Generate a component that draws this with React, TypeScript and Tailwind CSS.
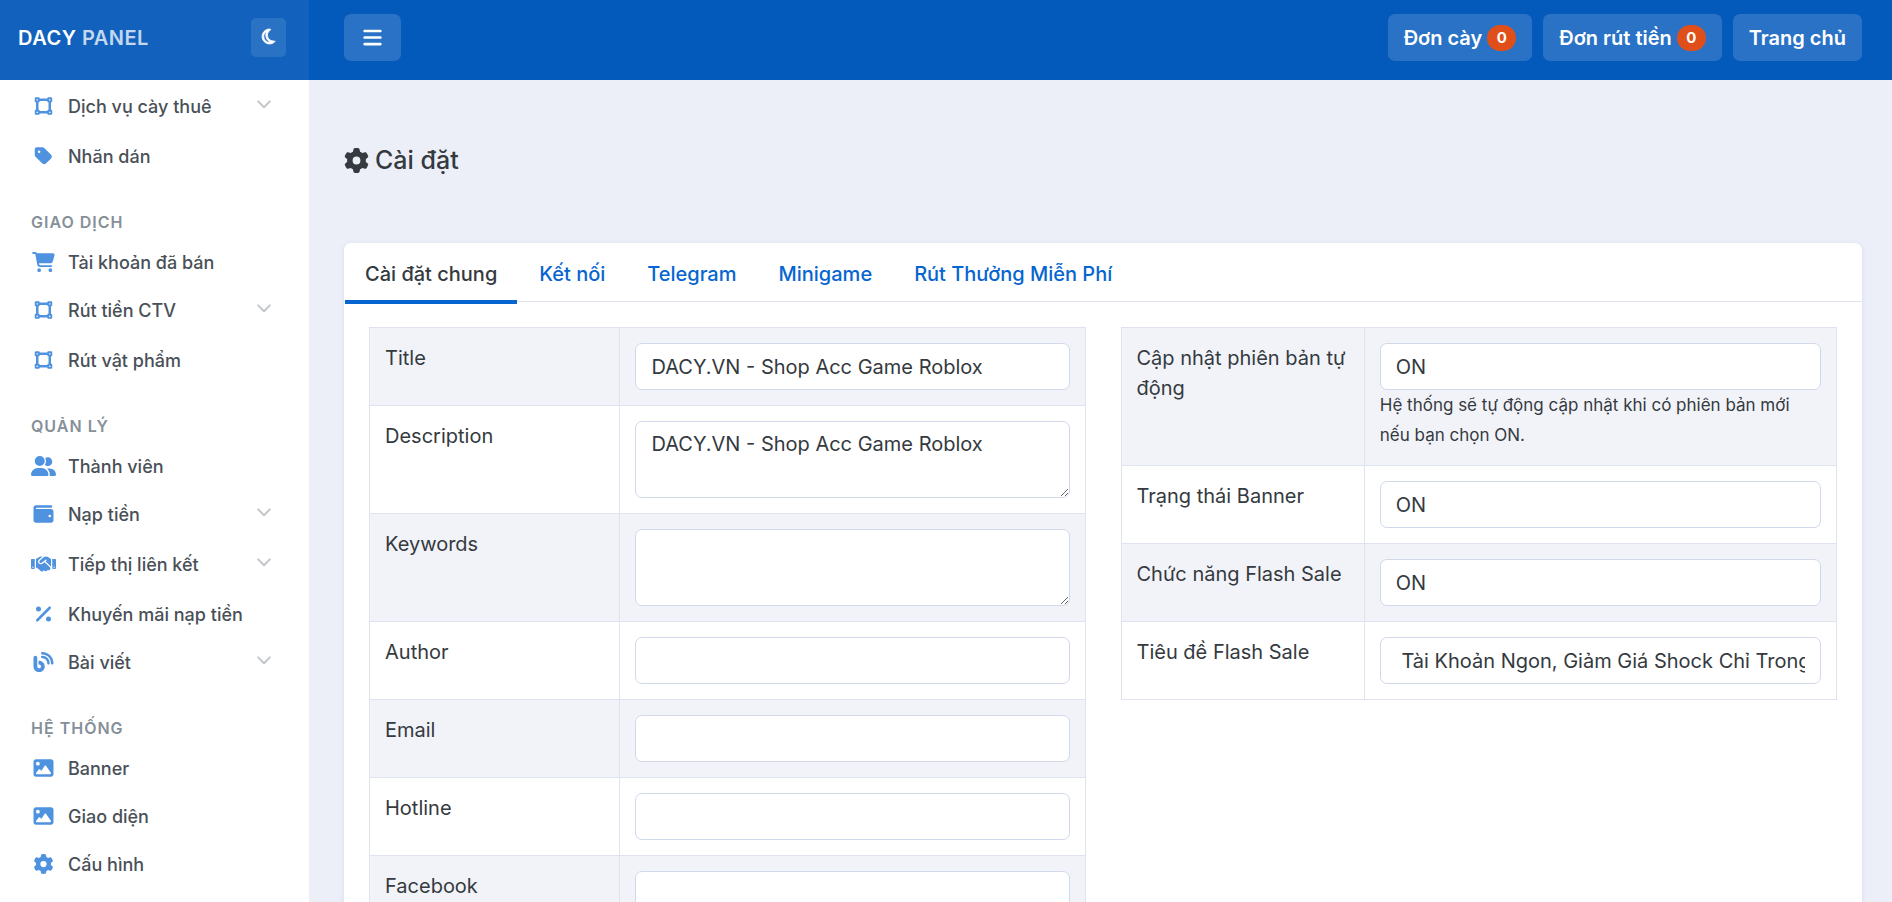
import type { ComponentType, ReactNode } from "react";
import {
  FaBars,
  FaBlog,
  FaCartShopping,
  FaGear,
  FaHandshake,
  FaImage,
  FaPercent,
  FaRegMoon,
  FaTag,
  FaUserGroup,
  FaVectorSquare,
  FaWallet,
} from "react-icons/fa6";

type Icon = ComponentType<{ className?: string }>;
type NavItem = { label: string; icon: Icon; submenu?: boolean };
type NavGroup = { title?: string; items: NavItem[] };

const groups: NavGroup[] = [
  {
    items: [
      { label: "Dịch vụ cày thuê", icon: FaVectorSquare, submenu: true },
      { label: "Nhãn dán", icon: FaTag },
    ],
  },
  {
    title: "Giao dịch",
    items: [
      { label: "Tài khoản đã bán", icon: FaCartShopping },
      { label: "Rút tiền CTV", icon: FaVectorSquare, submenu: true },
      { label: "Rút vật phẩm", icon: FaVectorSquare },
    ],
  },
  {
    title: "Quản lý",
    items: [
      { label: "Thành viên", icon: FaUserGroup },
      { label: "Nạp tiền", icon: FaWallet, submenu: true },
      { label: "Tiếp thị liên kết", icon: FaHandshake, submenu: true },
      { label: "Khuyến mãi nạp tiền", icon: FaPercent },
      { label: "Bài viết", icon: FaBlog, submenu: true },
    ],
  },
  {
    title: "Hệ thống",
    items: [
      { label: "Banner", icon: FaImage },
      { label: "Giao diện", icon: FaImage },
      { label: "Cấu hình", icon: FaGear },
    ],
  },
];

const controlClass =
  "block w-full rounded-[7px] border border-[#d1d8ea] bg-white px-[15px] text-xl leading-[30px] text-[#343a40] outline-none focus:border-[#0665d0]";

const tabs = ["Cài đặt chung", "Kết nối", "Telegram", "Minigame", "Rút Thưởng Miễn Phí"];

function Chevron() {
  return (
    <svg viewBox="0 0 14 9" className="mb-1 h-[9px] w-[14px] shrink-0" fill="none" stroke="#c3c6ca" strokeWidth="2" strokeLinecap="round" strokeLinejoin="round" aria-hidden="true">
      <path d="M1.2 1.4 7 7.2l5.800-5.800" />
    </svg>
  );
}

function Sidebar() {
  return (
    <aside className="flex h-screen w-[309px] shrink-0 flex-col bg-white">
      <div className="flex h-20 shrink-0 items-center justify-between bg-[#1262bd] pr-[23px] pb-[5px] pl-[18px]">
        <a href="#" className="text-xl font-semibold tracking-wide text-white">
          DACY <span className="text-white/75">PANEL</span>
        </a>
        <button type="button" aria-label="Dark mode" className="flex h-[39px] w-[35px] items-center justify-center rounded-[5px] bg-white/10 pb-[3px] text-white">
          <FaRegMoon className="size-[17px] overflow-visible [stroke-width:28]" />
        </button>
      </div>
      <nav className="min-h-0 flex-1 overflow-hidden pt-[2px]">
        {groups.map((group, i) => (
          <section key={i}>
            {group.title && (
              <h2 className="pt-8 pb-[6px] pl-[31px] text-base leading-5 font-semibold tracking-[1px] text-[#869099] uppercase">
                {group.title}
              </h2>
            )}
            <ul>
              {group.items.map(({ label, icon: ItemIcon, submenu }) => (
                <li key={label} className={submenu ? "h-[50px] last:h-12" : "h-12"}>
                  <a href="#" className="flex h-12 items-center pr-[38px] pl-[31px] text-[18px] text-[#495057]">
                    <ItemIcon className="h-5 w-[25px] shrink-0 text-[#4f93e0]" />
                    <span className="ml-3 flex-1 font-medium">{label}</span>
                    {submenu && <Chevron />}
                  </a>
                </li>
              ))}
            </ul>
          </section>
        ))}
      </nav>
    </aside>
  );
}

function HeaderLink({ children, count }: { children: ReactNode; count?: number }) {
  return (
    <a href="#" className="flex h-[47px] items-center gap-[5px] rounded-[7px] bg-white/15 px-4 text-xl font-semibold text-white">
      {children}
      {count !== undefined && (
        <span className="flex h-[26px] w-[29px] items-center justify-center rounded-full bg-[#e04f1a] text-[15px] font-bold">{count}</span>
      )}
    </a>
  );
}

function Row({ id, label, children }: { id: string; label: string; children: ReactNode }) {
  return (
    <tr className="odd:bg-[#f2f3f9]">
      <td className="w-(--label-col) border border-[#dfe3ef] p-[15px] align-top">
        <label htmlFor={id}>{label}</label>
      </td>
      <td className="border border-[#dfe3ef] p-[15px] align-top">{children}</td>
    </tr>
  );
}

function TextRow({ id, label, value = "" }: { id: string; label: string; value?: string }) {
  return (
    <Row id={id} label={label}>
      <input id={id} type="text" defaultValue={value} className={`${controlClass} h-[47px]`} />
    </Row>
  );
}

function AreaRow({ id, label, value = "" }: { id: string; label: string; value?: string }) {
  return (
    <Row id={id} label={label}>
      <textarea id={id} rows={2} defaultValue={value} className={`${controlClass} h-[77px] resize-y py-[7px]`} />
    </Row>
  );
}

function ToggleRow({ id, label, hint }: { id: string; label: string; hint?: string }) {
  return (
    <Row id={id} label={label}>
      <select id={id} defaultValue="ON" className={`${controlClass} h-[47px] appearance-none`}>
        <option>ON</option>
        <option>OFF</option>
      </select>
      {hint && <p className="text-[17px] leading-[30px]">{hint}</p>}
    </Row>
  );
}

export default function App() {
  return (
    <div className="flex h-screen overflow-hidden bg-[#eceff8] font-['Inter','Noto_Sans',sans-serif] text-[#343a40]">
      <Sidebar />
      <div className="flex min-w-0 flex-1 flex-col">
        <header className="flex h-20 shrink-0 items-center justify-between bg-[#045abb] pr-[30px] pb-[5px] pl-[35px]">
          <button type="button" aria-label="Menu" className="flex h-[47px] w-[57px] items-center justify-center rounded-[7px] bg-white/15 text-white">
            <FaBars className="size-[21px]" />
          </button>
          <div className="flex gap-[11px]">
            <HeaderLink count={0}>Đơn cày</HeaderLink>
            <HeaderLink count={0}>Đơn rút tiền</HeaderLink>
            <HeaderLink>Trang chủ</HeaderLink>
          </div>
        </header>
        <main className="min-h-0 flex-1 overflow-hidden pr-[30px] pl-[35px]">
          <h1 className="flex h-[163px] items-center gap-[6px] pb-[2px] text-[25px] font-medium">
            <FaGear className="size-[25px]" />
            Cài đặt
          </h1>
          <div className="rounded-[7px] bg-white shadow-[0_1px_4px_rgba(196,205,228,0.6)]">
            <ul role="tablist" className="flex h-[59px] gap-[2px] border-b border-[#dfe3ef] px-px">
              {tabs.map((tab, i) => (
                <li key={tab} className="flex">
                  <button
                    type="button"
                    role="tab"
                    aria-selected={i === 0}
                    className={`-mb-[3px] border-b-4 px-5 pt-1 text-xl font-medium ${i === 0 ? "border-[#0665d0] text-[#343a40]" : "border-transparent text-[#0665d0]"}`}
                  >
                    {tab}
                  </button>
                </li>
              ))}
            </ul>
            <div className="grid grid-cols-2 items-start gap-[35px] p-[25px] text-xl leading-[30px]">
              <table className="w-full table-fixed border-collapse [--label-col:35%]">
                <tbody>
                  <TextRow id="title" label="Title" value="DACY.VN - Shop Acc Game Roblox" />
                  <AreaRow id="description" label="Description" value="DACY.VN - Shop Acc Game Roblox" />
                  <AreaRow id="keywords" label="Keywords" />
                  <TextRow id="author" label="Author" />
                  <TextRow id="email" label="Email" />
                  <TextRow id="hotline" label="Hotline" />
                  <TextRow id="facebook" label="Facebook" />
                </tbody>
              </table>
              <table className="w-full table-fixed border-collapse [--label-col:34%]">
                <tbody>
                  <ToggleRow id="auto-update" label="Cập nhật phiên bản tự động" hint="Hệ thống sẽ tự động cập nhật khi có phiên bản mới nếu bạn chọn ON." />
                  <ToggleRow id="banner" label="Trạng thái Banner" />
                  <ToggleRow id="flash-sale" label="Chức năng Flash Sale" />
                  <TextRow id="flash-title" label="Tiêu đề Flash Sale" value=" Tài Khoản Ngon, Giảm Giá Shock Chỉ Trong Hôm Nay" />
                </tbody>
              </table>
            </div>
          </div>
        </main>
      </div>
    </div>
  );
}
